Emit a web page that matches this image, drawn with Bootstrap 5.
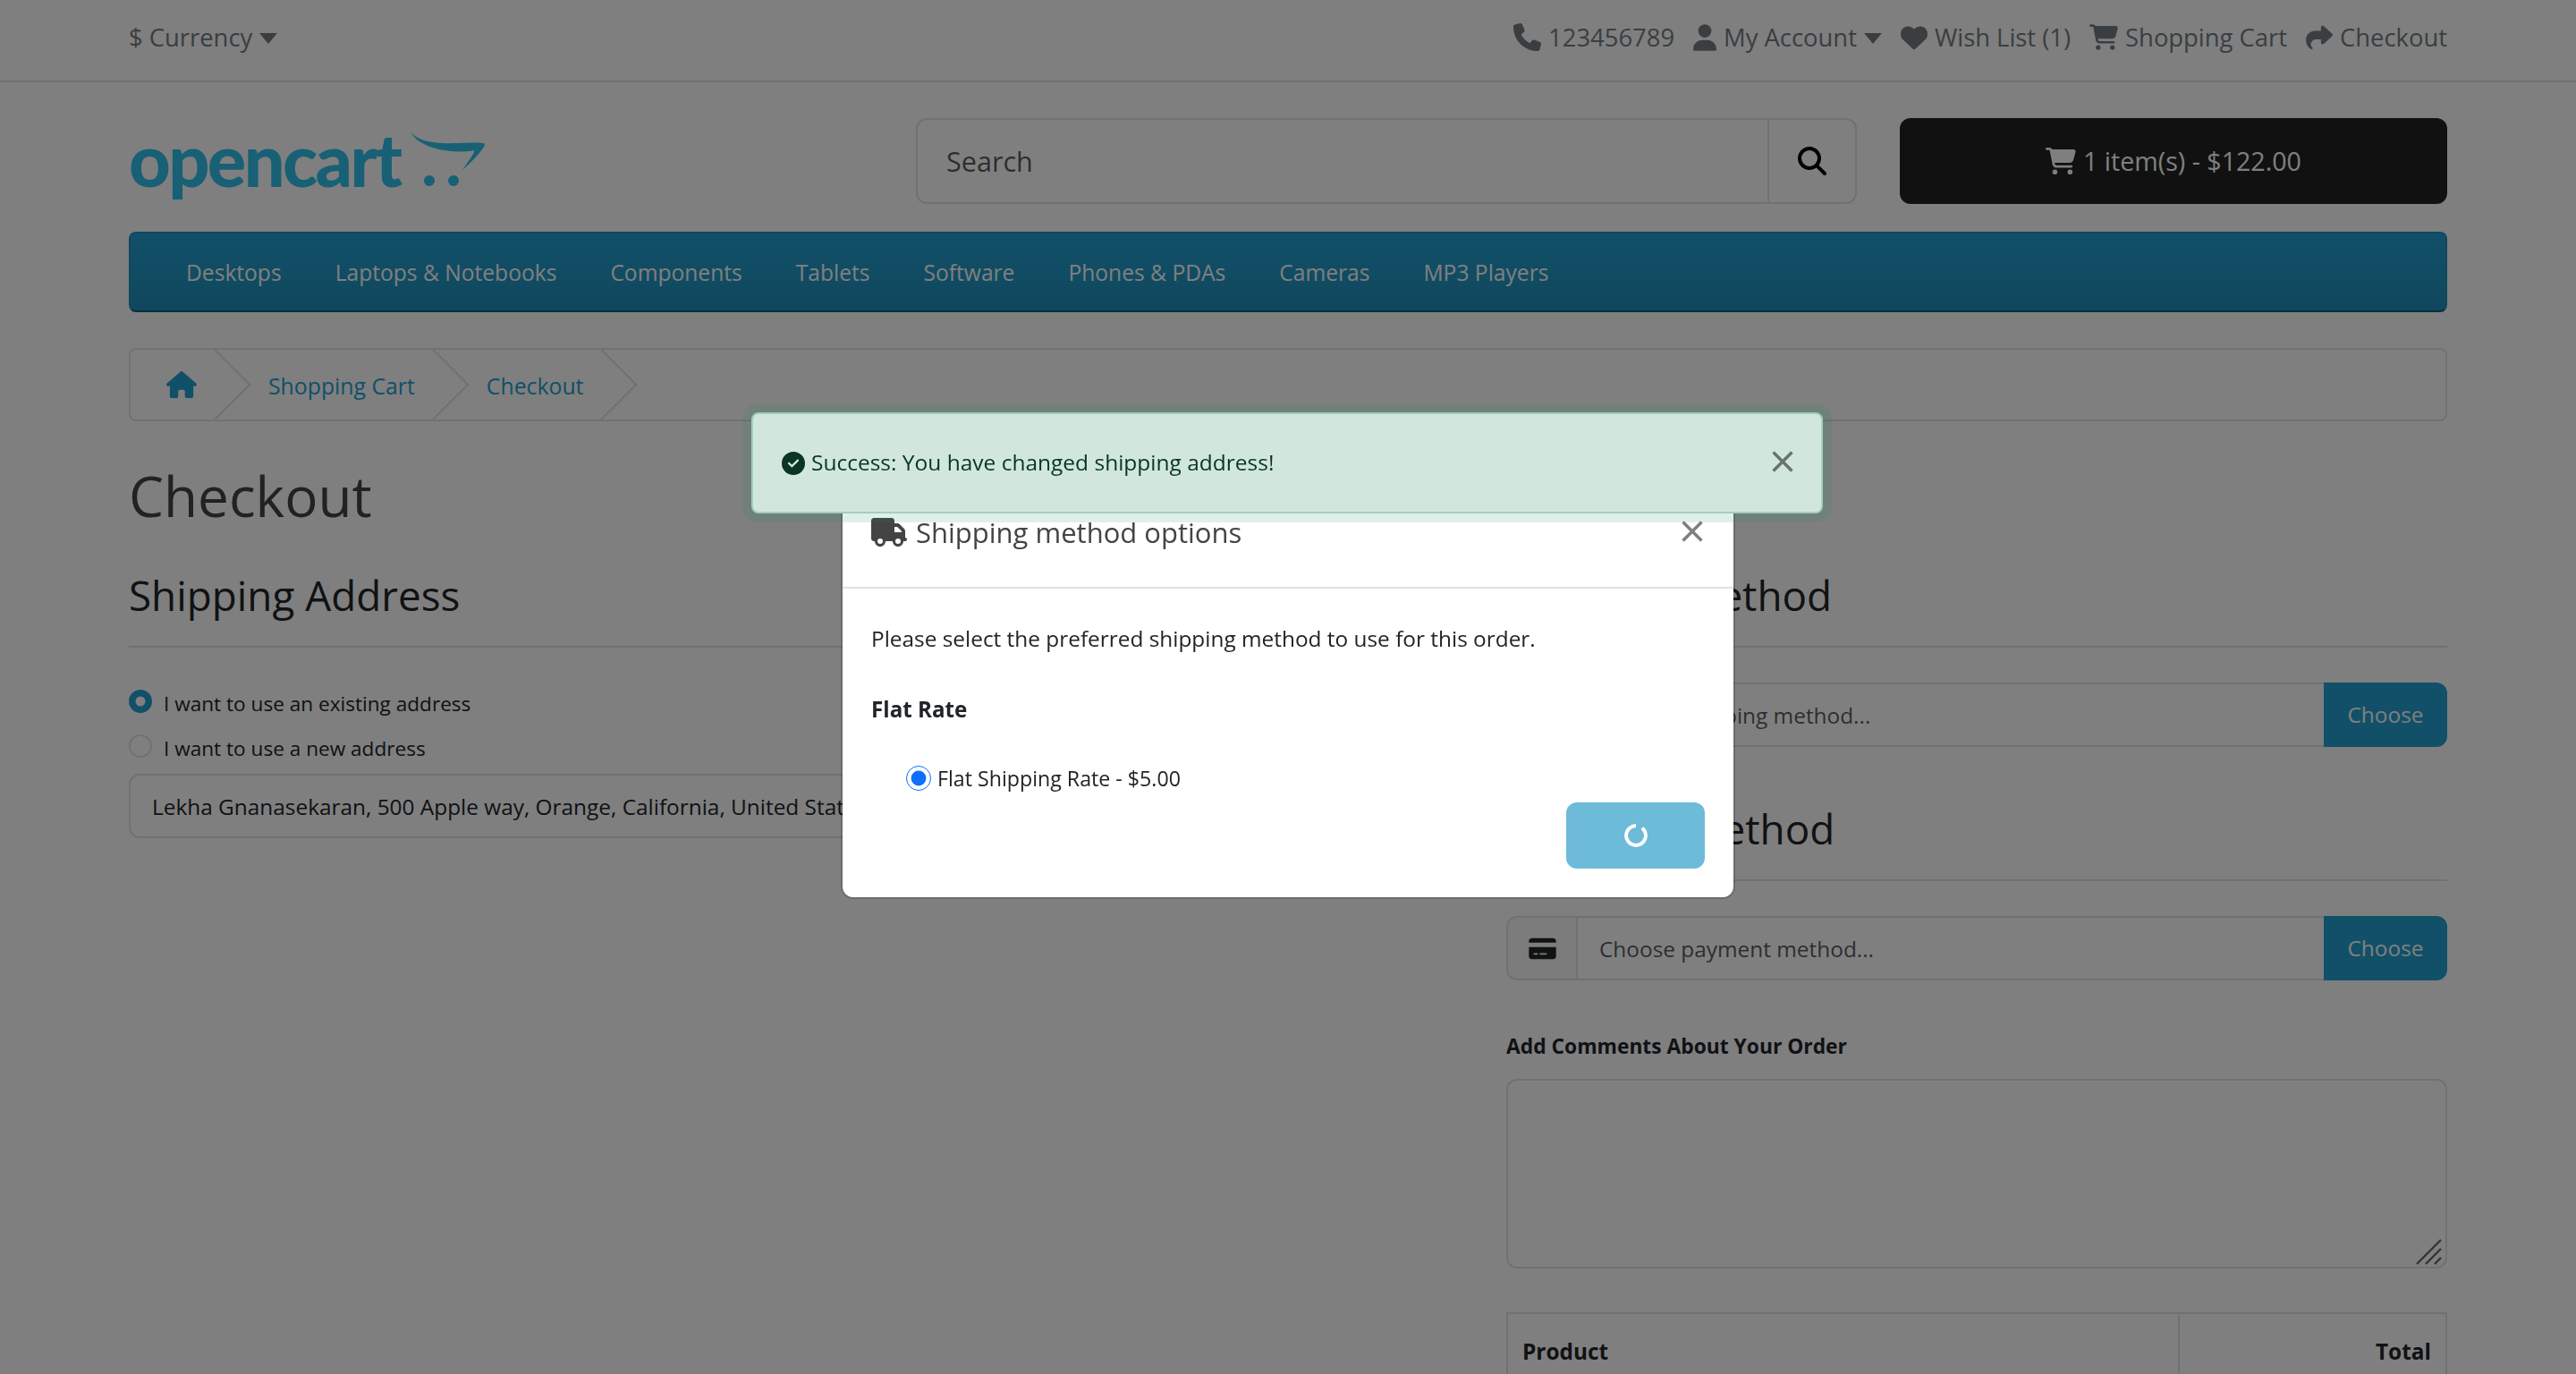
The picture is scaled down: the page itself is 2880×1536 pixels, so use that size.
<!DOCTYPE html>
<html lang="en">
<head>
  <meta charset="UTF-8" />
  <title>Checkout</title>
  <link href="https://cdn.jsdelivr.net/npm/bootstrap@5.3.0/dist/css/bootstrap.min.css" rel="stylesheet"/>
  <style>
    html { font-size: 32px; }
    :root { --bs-border-width: 2px; --bs-body-font-size: 24.4px; --bs-body-font-family: "Open Sans", "Liberation Sans", sans-serif; }
    body { overflow: hidden; height: 1536px; font-family: "Open Sans", "Liberation Sans", sans-serif; font-size: 24.4px; }
    a { text-decoration: none; }
    svg.ico { fill: currentColor; display: block; flex: none; }
    .container { max-width: 2640px; }

    .oc-top { height: 92px; border-bottom: 2px solid #dee2e6; font-size: 27.4px; color: #747c83; }
    .oc-top .container { padding-bottom: 6px; }
    .oc-top-links { gap: 21px; }
    .oc-top-links span, .oc-currency span { color: #747c83; }
    .oc-top .oc-item { gap: 8px; }
    .oc-caret { width: 0; height: 0; border-left: 10px solid transparent; border-right: 10px solid transparent; border-top: 12px solid currentColor; margin-top: 2px; }
    .oc-currency .oc-caret { margin-left: 8px; }

    .oc-head { margin-top: 40px; height: 96px; }
    .oc-logo { height: 96px; }
    .oc-logo-text { font-family: Lato, "Liberation Sans", sans-serif; font-weight: 900; font-size: 81px; letter-spacing: -2.6px; color: #30c0ea; line-height: 96px; margin-top: -4px; }
    .oc-logo svg { margin: 8px 0 0 8px; flex: none; }
    .oc-search .form-control { font-size: 30.6px; height: 96px; padding-left: 32px; border-top-left-radius: 12px; border-bottom-left-radius: 12px; }
    .oc-search .btn { width: 100px; height: 96px; color: #000; border: 2px solid #dee2e6; background: #fff; padding: 0; display: flex; align-items: center; justify-content: center; }
    .oc-cart-btn { height: 96px; font-size: 28.6px; background: #222; color: #fff; border: 0; gap: 8px; }

    .oc-nav { margin-top: 31px; height: 90px; padding: 3px 32px 0; background: linear-gradient(#23a1d1, #1f90bb); border: 2px solid #1f90bb; border-bottom-color: #145e7a; border-radius: 8px; font-size: 24.6px; }
    .oc-nav a { color: #fff; padding: 0 30px; }

    .oc-crumbs { margin: 40px 0 0; height: 82px; border: 2px solid #dee2e6; border-radius: 8px; overflow: hidden; list-style: none; padding: 0; font-size: 24.8px; }
    .oc-crumbs li { position: relative; padding: 3px 60px 0 20px; height: 100%; }
    .oc-crumbs li:first-child { padding: 0 60px 0 40px; }
    .oc-crumbs li::after { content: ""; position: absolute; right: 0; top: 11px; width: 56px; height: 56px; border-top: 2px solid #dee2e6; border-right: 2px solid #dee2e6; transform: rotate(45deg); transform-origin: center; margin-right: 11px; }
    .oc-crumbs a { color: #23a1d1; }

    .oc-title { font-size: 62px; font-weight: 400; line-height: 74px; margin: 46px 0 0; color: #444; }
    .oc-legend { font-size: 45.8px; font-weight: 400; line-height: 56px; margin: 46px 0 0; padding-bottom: 29px; border-bottom: 2px solid #dee2e6; }
    .oc-legend.oc-next { margin-top: 63px; }

    .form-control, .input-group-text { font-size: 24.4px; line-height: 43px; height: 72px; }
    .oc-radios { margin-top: 38px; }
    .oc-radio { font-size: 22.6px; height: 50px; gap: 13px; }
    .oc-radio .form-check-input { width: 26px; height: 26px; margin: 0 0 6px; flex: none; }
    .oc-radio .form-check-input:checked { background-color: #23a1d1; border-color: #23a1d1; }
    .oc-addr { margin-top: 3px; }
    .oc-group { margin-top: 39px; }
    .oc-choose { background: #23a1d1; border-color: #23a1d1; color: #fff; width: 138px; font-size: 24.4px; }
    .oc-group .input-group-text { width: 80px; justify-content: center; padding: 0; }
    .oc-label { font-weight: 700; font-size: 22.8px; margin: 56px 0 0; line-height: 36px; }
    .oc-comment { position: relative; margin-top: 18px; height: 212px; }
    .oc-comment textarea { height: 212px; resize: none; }
    .oc-grip { position: absolute; right: 5px; bottom: 4px; color: #000; opacity: .6; }
    .oc-sum { margin: 49px 0 0; border: 2px solid #dee2e6; }
    .oc-sum th { font-size: 24.4px; padding: 24px 16px; height: 86px; }
    .oc-sum th + th { border-left: 2px solid #dee2e6; width: 299px; }

    .modal-dialog.oc-dialog { max-width: 996px; margin: 542px auto 0; }
    .oc-dialog .modal-content { border-radius: 12px; border: 0; box-shadow: 0 0 0 2px rgba(0,0,0,.15); }
    .oc-dialog .modal-header { padding: 29px 32px 37px; align-items: flex-start; }
    .oc-dialog .modal-title { font-size: 31px; line-height: 48px; color: #444; gap: 10px; }
    .oc-dialog .modal-body { padding: 37px 32px 32px; font-size: 24.4px; }
    .oc-dialog .btn-close { font-size: 28px; padding: 0; margin: 9px 0 0 auto; }
    .oc-dialog p { margin: 0; line-height: 38px; }
    .oc-rate { font-weight: 700; line-height: 38px; margin-top: 41px; font-size: 24.2px; }
    .oc-ship { margin: 39px 0 0 39px; gap: 7px; font-size: 23.2px; height: 38px; }
    .oc-ship input { width: 28px; height: 28px; margin: 0; accent-color: #0d6efd; }
    .oc-go { width: 155px; height: 74px; margin-top: 8px; padding: 0; border: 0; display: flex; align-items: center; justify-content: center; --bs-btn-disabled-bg: #1f97c5; --bs-btn-disabled-opacity: .65; }
    .oc-go .spinner-border { width: 26px; height: 26px; border: 4px solid #fff; animation: none; -webkit-mask: conic-gradient(transparent 0 40deg, #000 40deg); mask: conic-gradient(transparent 0 40deg, #000 40deg); }

    .oc-alert-wrap { position: fixed; top: 461px; left: 840px; width: 1198px; z-index: 1080; }
    .oc-alert { height: 113px; margin: 0; padding: 0 29px 0 32px; font-size: 24.5px; gap: 7px; color: #0a3622; background: #d1e7dd; border: 2px solid #a3cfbb; border-radius: 8px; box-shadow: 0 0 0 10px rgba(25,135,84,.13); }
    .oc-alert .btn-close { font-size: 28px; padding: 0; margin: -4px 0 0 auto; }
  </style>
</head>
<body>
  <div class="oc-top">
    <div class="container h-100 d-flex align-items-center justify-content-between">
      <div class="oc-currency d-flex align-items-center"><span>$ Currency</span><i class="oc-caret"></i></div>
      <div class="oc-top-links d-flex align-items-center">
        <div class="oc-item d-flex align-items-center">
          <svg class="ico" width="31" height="31" viewBox="0 0 512 512"><path d="M164.9 24.6c-7.7-18.6-28-28.5-47.4-23.2l-88 24C12.1 30.2 0 46 0 64C0 311.4 200.6 512 448 512c18 0 33.8-12.1 38.6-29.5l24-88c5.3-19.4-4.6-39.7-23.2-47.4l-96-40c-16.3-6.8-35.2-2.1-46.3 11.6L304.7 368C234.3 334.7 177.3 277.7 144 207.3L193.3 167c13.7-11.2 18.4-30 11.6-46.3l-40-96z"/></svg>
          <span>123456789</span>
        </div>
        <div class="oc-item d-flex align-items-center">
          <svg class="ico" width="26" height="30" viewBox="0 0 448 512"><path d="M224 256A128 128 0 1 0 224 0a128 128 0 1 0 0 256zm-45.7 48C79.8 304 0 383.8 0 482.3C0 498.7 13.3 512 29.7 512H418.3c16.4 0 29.7-13.3 29.7-29.7C448 383.8 368.2 304 269.7 304H178.3z"/></svg>
          <span>My Account</span><i class="oc-caret"></i>
        </div>
        <div class="oc-item d-flex align-items-center">
          <svg class="ico" width="30" height="30" viewBox="0 0 512 512"><path d="M47.6 300.4L228.3 469.1c7.5 7 17.4 10.9 27.7 10.9s20.2-3.9 27.7-10.9L464.4 300.4c30.4-28.3 47.6-68 47.6-109.5v-5.8c0-69.9-50.5-129.5-119.4-141C347 36.5 300.6 51.4 268 84L256 96 244 84c-32.6-32.6-79-47.5-124.6-39.9C50.5 55.6 0 115.2 0 185.1v5.8c0 41.5 17.2 81.2 47.6 109.5z"/></svg>
          <span>Wish List (1)</span>
        </div>
        <div class="oc-item d-flex align-items-center">
          <svg class="ico" width="32" height="29" viewBox="0 0 576 512"><path d="M0 24C0 10.7 10.7 0 24 0H69.5c22 0 41.5 12.8 50.6 32h411c26.3 0 45.5 25 38.6 50.4l-41 152.3c-8.5 31.4-37 53.3-69.5 53.3H170.7l5.4 28.5c2.2 11.3 12.1 19.5 23.6 19.5H488c13.3 0 24 10.7 24 24s-10.7 24-24 24H199.7c-34.6 0-64.3-24.6-70.7-58.5L77.4 54.5c-.7-3.8-4-6.5-7.9-6.5H24C10.7 48 0 37.3 0 24zM128 464a48 48 0 1 1 96 0 48 48 0 1 1 -96 0zm336-48a48 48 0 1 1 0 96 48 48 0 1 1 0-96z"/></svg>
          <span>Shopping Cart</span>
        </div>
        <div class="oc-item d-flex align-items-center">
          <svg class="ico" width="30" height="30" viewBox="0 0 512 512"><path d="M307 34.8c-11.5 5.1-19 16.6-19 29.2v64H176C78.8 128 0 206.8 0 304C0 417.3 81.5 467.9 100.2 478.1c2.5 1.4 5.3 1.9 8.1 1.9c10.9 0 19.7-8.9 19.7-19.7c0-7.5-4.3-14.4-9.8-19.5C108.8 431.9 96 414.4 96 384c0-53 43-96 96-96h96v64c0 12.6 7.4 24.1 19 29.2s25 3 34.4-5.4l160-144c6.7-6.1 10.6-14.7 10.6-23.8s-3.8-17.7-10.6-23.8l-160-144c-9.4-8.5-22.9-10.6-34.4-5.4z"/></svg>
          <span>Checkout</span>
        </div>
      </div>
    </div>
  </div>

  <div class="container">
    <div class="row oc-head">
      <div class="col-4">
        <div class="oc-logo d-flex align-items-center">
          <span class="oc-logo-text">opencart</span>
          <svg width="90" height="80" viewBox="0 0 90 80">
            <path d="M4 3C12 15 34 17 58 16C72 15.5 84 15 87 17C87 21 76 34 62 46C70 34 76 27 75 24C60 28 14 25 4 3Z" fill="#30c0ea"/>
            <circle cx="25" cy="58" r="6" fill="#30c0ea"/>
            <circle cx="52" cy="58" r="6" fill="#30c0ea"/>
          </svg>
        </div>
      </div>
      <div class="col-5">
        <div class="input-group oc-search">
          <input type="text" class="form-control" placeholder="Search">
          <button type="button" class="btn">
            <svg class="ico" width="32" height="32" viewBox="0 0 512 512"><path d="M416 208c0 45.9-14.9 88.3-40 122.7L502.6 457.4c12.5 12.5 12.5 32.8 0 45.3s-32.8 12.5-45.3 0L330.7 376c-34.4 25.2-76.8 40-122.7 40C93.1 416 0 322.9 0 208S93.1 0 208 0S416 93.1 416 208zM208 352a144 144 0 1 0 0-288 144 144 0 1 0 0 288z"/></svg>
          </button>
        </div>
      </div>
      <div class="col-3">
        <button type="button" class="btn oc-cart-btn w-100 d-flex align-items-center justify-content-center">
          <svg class="ico" width="34" height="30" viewBox="0 0 576 512"><path d="M0 24C0 10.7 10.7 0 24 0H69.5c22 0 41.5 12.8 50.6 32h411c26.3 0 45.5 25 38.6 50.4l-41 152.3c-8.5 31.4-37 53.3-69.5 53.3H170.7l5.4 28.5c2.2 11.3 12.1 19.5 23.6 19.5H488c13.3 0 24 10.7 24 24s-10.7 24-24 24H199.7c-34.6 0-64.3-24.6-70.7-58.5L77.4 54.5c-.7-3.8-4-6.5-7.9-6.5H24C10.7 48 0 37.3 0 24zM128 464a48 48 0 1 1 96 0 48 48 0 1 1 -96 0zm336-48a48 48 0 1 1 0 96 48 48 0 1 1 0-96z"/></svg>
          1 item(s) - $122.00
        </button>
      </div>
    </div>

    <nav class="oc-nav d-flex align-items-center">
      <a href="#">Desktops</a>
      <a href="#">Laptops &amp; Notebooks</a>
      <a href="#">Components</a>
      <a href="#">Tablets</a>
      <a href="#">Software</a>
      <a href="#">Phones &amp; PDAs</a>
      <a href="#">Cameras</a>
      <a href="#">MP3 Players</a>
    </nav>

    <ul class="oc-crumbs d-flex">
      <li class="d-flex align-items-center"><a href="#"><svg class="ico" width="34" height="30" viewBox="0 0 576 512"><path d="M575.8 255.5c0 18-15 32.1-32 32.1h-32l.7 160.2c0 2.7-.2 5.4-.5 8.1V472c0 22.1-17.9 40-40 40H456c-1.1 0-2.2 0-3.3-.1c-1.4 .1-2.8 .1-4.2 .1H416 392c-22.1 0-40-17.9-40-40V448 384c0-17.7-14.3-32-32-32H256c-17.7 0-32 14.3-32 32v64 24c0 22.1-17.9 40-40 40H160 128.1c-1.5 0-3-.1-4.5-.2c-1.2 .1-2.4 .2-3.6 .2H104c-22.1 0-40-17.9-40-40V360c0-.9 0-1.9 .1-2.8V287.6H32c-18 0-32-14-32-32.1c0-9 3-17 10-24L266.4 8c7-7 15-8 22-8s15 2 21 7L564.8 231.5c8 7 12 15 11 24z"/></svg></a></li>
      <li class="d-flex align-items-center"><a href="#">Shopping Cart</a></li>
      <li class="d-flex align-items-center"><a href="#">Checkout</a></li>
    </ul>

    <h1 class="oc-title">Checkout</h1>

    <div class="row">
      <div class="col-7">
        <h2 class="oc-legend">Shipping Address</h2>
        <div class="oc-radios">
          <div class="oc-radio d-flex align-items-center"><input class="form-check-input" type="radio" name="addr" checked><span>I want to use an existing address</span></div>
          <div class="oc-radio d-flex align-items-center"><input class="form-check-input" type="radio" name="addr"><span>I want to use a new address</span></div>
        </div>
        <input type="text" class="form-control oc-addr" value="Lekha Gnanasekaran, 500 Apple way, Orange, California, United States" readonly>
      </div>
      <div class="col-5">
        <h2 class="oc-legend">Shipping Method</h2>
        <div class="input-group oc-group">
          <span class="input-group-text"><svg class="ico" width="36" height="29" viewBox="0 0 640 512"><path d="M48 0C21.5 0 0 21.5 0 48V368c0 26.5 21.5 48 48 48H64c0 53 43 96 96 96s96-43 96-96H384c0 53 43 96 96 96s96-43 96-96h32c17.7 0 32-14.3 32-32s-14.3-32-32-32V288 256 237.3c0-17-6.7-33.3-18.7-45.3L512 114.7c-12-12-28.3-18.7-45.3-18.7H416V48c0-26.5-21.5-48-48-48H48zM416 160h50.7L544 237.3V256H416V160zM112 416a48 48 0 1 1 96 0 48 48 0 1 1 -96 0zm368-48a48 48 0 1 1 0 96 48 48 0 1 1 0-96z"/></svg></span>
          <input type="text" class="form-control" placeholder="Choose shipping method...">
          <button type="button" class="btn oc-choose">Choose</button>
        </div>
        <h2 class="oc-legend oc-next">Payment Method</h2>
        <div class="input-group oc-group">
          <span class="input-group-text"><svg class="ico" width="31" height="27" viewBox="0 0 576 512"><path d="M64 32C28.7 32 0 60.7 0 96v32H576V96c0-35.3-28.7-64-64-64H64zM576 224H0V416c0 35.3 28.7 64 64 64H512c35.3 0 64-28.7 64-64V224zM112 352h64c8.8 0 16 7.2 16 16s-7.2 16-16 16H112c-8.8 0-16-7.2-16-16s7.2-16 16-16zm112 16c0-8.8 7.2-16 16-16H368c8.8 0 16 7.2 16 16s-7.2 16-16 16H240c-8.8 0-16-7.2-16-16z"/></svg></span>
          <input type="text" class="form-control" placeholder="Choose payment method...">
          <button type="button" class="btn oc-choose">Choose</button>
        </div>
        <div class="oc-label">Add Comments About Your Order</div>
        <div class="oc-comment">
          <textarea class="form-control"></textarea>
          <svg class="oc-grip" width="30" height="30" viewBox="0 0 30 30"><path d="M1 29L28 2M11 29L28 12M21 29L28 22" stroke="#000" stroke-width="2.4" fill="none"/></svg>
        </div>
        <table class="table oc-sum w-100">
          <thead><tr><th>Product</th><th class="text-end">Total</th></tr></thead>
        </table>
      </div>
    </div>
  </div>

  <div class="modal-backdrop show"></div>
  <div class="modal show d-block" tabindex="-1">
    <div class="modal-dialog oc-dialog">
      <div class="modal-content">
        <div class="modal-header">
          <h5 class="modal-title d-flex align-items-center">
            <svg class="ico" width="40" height="32" viewBox="0 0 640 512"><path d="M48 0C21.5 0 0 21.5 0 48V368c0 26.5 21.5 48 48 48H64c0 53 43 96 96 96s96-43 96-96H384c0 53 43 96 96 96s96-43 96-96h32c17.7 0 32-14.3 32-32s-14.3-32-32-32V288 256 237.3c0-17-6.7-33.3-18.7-45.3L512 114.7c-12-12-28.3-18.7-45.3-18.7H416V48c0-26.5-21.5-48-48-48H48zM416 160h50.7L544 237.3V256H416V160zM112 416a48 48 0 1 1 96 0 48 48 0 1 1 -96 0zm368-48a48 48 0 1 1 0 96 48 48 0 1 1 0-96z"/></svg>
            Shipping method options
          </h5>
          <button type="button" class="btn-close"></button>
        </div>
        <div class="modal-body">
          <p>Please select the preferred shipping method to use for this order.</p>
          <div class="oc-rate">Flat Rate</div>
          <div class="oc-ship d-flex align-items-center"><input type="radio" checked><span>Flat Shipping Rate - $5.00</span></div>
          <div class="d-flex justify-content-end">
            <button type="button" class="btn btn-primary oc-go" disabled><span class="spinner-border"></span></button>
          </div>
        </div>
      </div>
    </div>
  </div>

  <div class="oc-alert-wrap">
    <div class="alert oc-alert d-flex align-items-center">
      <svg class="ico" width="26" height="26" viewBox="0 0 512 512"><path d="M256 512A256 256 0 1 0 256 0a256 256 0 1 0 0 512zM369 209L241 337c-9.4 9.4-24.6 9.4-33.9 0l-64-64c-9.4-9.4-9.4-24.6 0-33.9s24.6-9.4 33.9 0l47 47L335 175c9.4-9.4 24.6-9.4 33.9 0s9.4 24.6 0 33.9z"/></svg>
      <span>Success: You have changed shipping address!</span>
      <button type="button" class="btn-close"></button>
    </div>
  </div>

  <script src="https://cdn.jsdelivr.net/npm/bootstrap@5.3.0/dist/js/bootstrap.bundle.min.js"></script>
</body>
</html>
